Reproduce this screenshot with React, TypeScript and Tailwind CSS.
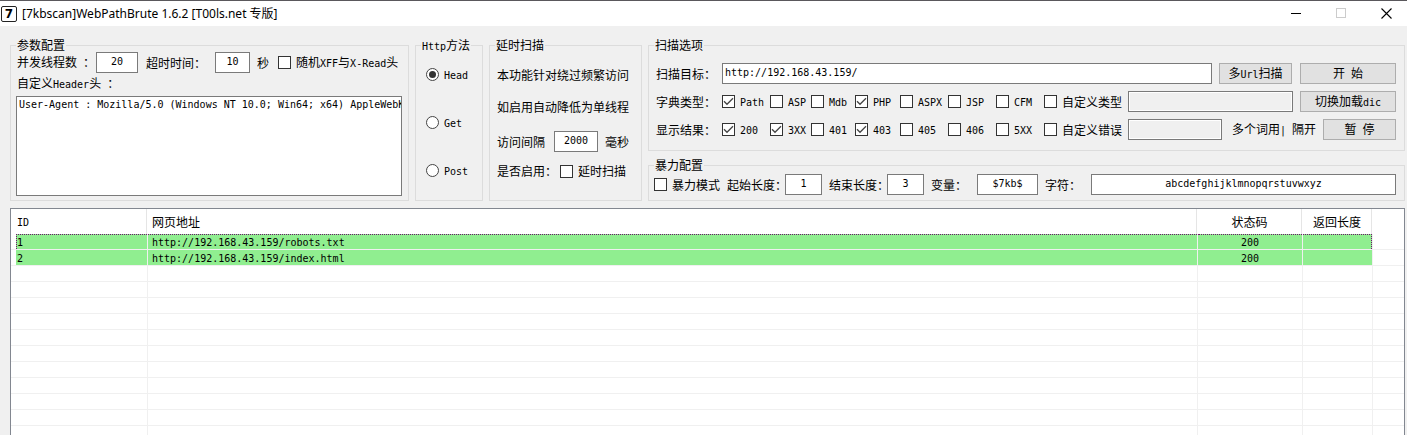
import React from "react";

const CJK = /([\u3000-\u9fff\uff00-\uffef]+)/;

/** Mixed text: Chinese runs at 12px, Latin runs in a 6px-wide monospace cell. */
function T({ children }: { children: string }) {
  return (
    <span className="whitespace-pre">
      {children.split(CJK).map((part, i) =>
        part === "" ? null : CJK.test(part) ? (
          <React.Fragment key={i}>{part}</React.Fragment>
        ) : (
          <span key={i} className="font-['DejaVu_Sans_Mono',monospace] text-[10px]">
            {part}
          </span>
        ),
      )}
    </span>
  );
}

function Group({
  title,
  className,
  children,
}: {
  title: string;
  className: string;
  children: React.ReactNode;
}) {
  return (
    <fieldset className={`min-w-0 border border-[#dcdcdc] ${className}`}>
      <legend className="ml-[5px] h-[14px] px-px leading-[14px]">
        <T>{title}</T>
      </legend>
      {children}
    </fieldset>
  );
}

function Check({ label, checked = false }: { label: string; checked?: boolean }) {
  return (
    <label className="flex items-center gap-[5px]">
      <span className="grid size-[13px] shrink-0">
        <input
          type="checkbox"
          defaultChecked={checked}
          className="peer col-start-1 row-start-1 size-[13px] appearance-none border border-[#333] bg-white"
        />
        <svg
          viewBox="0 0 13 13"
          className="pointer-events-none invisible col-start-1 row-start-1 size-[13px] peer-checked:visible"
        >
          <path d="M2 6.3 L5 9.3 L11 3.3" fill="none" stroke="#444" strokeWidth="1.3" />
        </svg>
      </span>
      <T>{label}</T>
    </label>
  );
}

function Radio({ label, checked = false }: { label: string; checked?: boolean }) {
  return (
    <label className="flex h-[13px] items-center gap-[5px]">
      <span className="grid size-[13px] shrink-0 place-items-center">
        <input
          type="radio"
          name="method"
          defaultChecked={checked}
          className="peer col-start-1 row-start-1 size-[13px] appearance-none rounded-full border border-[#444] bg-white"
        />
        <span className="pointer-events-none invisible col-start-1 row-start-1 size-[7px] rounded-full bg-[#333] peer-checked:visible" />
      </span>
      <T>{label}</T>
    </label>
  );
}

function Field({
  id,
  value,
  className,
  disabled = false,
  label,
}: {
  id: string;
  value?: string;
  className: string;
  disabled?: boolean;
  label?: string;
}) {
  return (
    <input
      id={id}
      type="text"
      aria-label={label}
      defaultValue={value}
      disabled={disabled}
      className={`h-[21px] min-w-0 border border-[#7a7a7a] bg-white px-[2px] pb-[2px] font-['DejaVu_Sans_Mono',monospace] text-[10px] disabled:bg-[#f0f0f0] disabled:shadow-[inset_0_0_0_1px_#fff] ${className}`}
    />
  );
}

function Button({ children, className }: { children: string; className: string }) {
  return (
    <button
      type="button"
      className={`h-[21px] shrink-0 border border-[#adadad] bg-[#e1e1e1] text-center leading-[18px] ${className}`}
    >
      <T>{children}</T>
    </button>
  );
}

const types: [string, boolean][] = [
  ["Path", true],
  ["ASP", false],
  ["Mdb", false],
  ["PHP", true],
  ["ASPX", false],
  ["JSP", false],
  ["CFM", false],
];
const codes: [string, boolean][] = [
  ["200", true],
  ["3XX", true],
  ["401", false],
  ["403", true],
  ["405", false],
  ["406", false],
  ["5XX", false],
];

const results = [
  { id: "1", url: "http://192.168.43.159/robots.txt", status: "200", length: "" },
  { id: "2", url: "http://192.168.43.159/index.html", status: "200", length: "" },
];

function OptionRow({ title, items }: { title: string; items: [string, boolean][] }) {
  return (
    <>
      <span className="w-[66px] shrink-0">
        <T>{title}</T>
      </span>
      <div className="grid shrink-0 grid-cols-[48px_41px_44px_45px_48px_48px_48px]">
        {items.map(([name, on]) => (
          <Check key={name} label={name} checked={on} />
        ))}
      </div>
    </>
  );
}

function TitleBar() {
  return (
    <header className="flex h-[26px] shrink-0 items-center border-t border-[#5a585c] bg-white pl-px">
      <span className="flex size-4 items-center justify-center rounded-[2px] border border-[#222] bg-white font-['DejaVu_Sans',sans-serif] text-[12px] leading-none font-bold">
        7
      </span>
      <h1 className="ml-[5px] flex-1 font-['Noto_Sans','Noto_Sans_CJK_SC',sans-serif] text-[12px]">
        [7kbscan]WebPathBrute 1.6.2 [T00ls.net 专版]
      </h1>
      <div className="flex gap-1">
        <button type="button" aria-label="最小化" className="flex h-[25px] w-[41px] items-center justify-center">
          <svg width="11" height="11" viewBox="0 0 11 11" shapeRendering="crispEdges">
            <path d="M0 5.5H10" stroke="#000" />
          </svg>
        </button>
        <button type="button" aria-label="最大化" disabled className="flex h-[25px] w-[41px] items-center justify-center">
          <svg width="11" height="11" viewBox="0 0 11 11" shapeRendering="crispEdges">
            <path d="M0.5 0.5H9.5V9.5H0.5Z" fill="none" stroke="#ccc" />
          </svg>
        </button>
        <button type="button" aria-label="关闭" className="flex h-[25px] w-[41px] items-center justify-center">
          <svg width="11" height="11" viewBox="0 0 11 11">
            <path d="M0.5 0.5L10.5 10.5M10.5 0.5L0.5 10.5" stroke="#000" strokeWidth="1.1" />
          </svg>
        </button>
      </div>
    </header>
  );
}

function Cell({
  className = "",
  inner = "",
  filled,
  children,
}: {
  className?: string;
  inner?: string;
  filled: boolean;
  children?: React.ReactNode;
}) {
  return (
    <td className={`border-r border-b border-[#f0f0f0] p-0 ${className}`}>
      <div className={`flex h-[15px] items-center ${filled ? "bg-[#90ee90]" : ""} ${inner}`}>{children}</div>
    </td>
  );
}

function ResultTable() {
  const blanks = Array.from({ length: 12 });
  const head = "mr-px flex h-[25px] items-center border-r border-[#e5e5e5]";
  return (
    <div className="mt-[7px] mr-[2px] ml-[10px] flex-1 overflow-hidden border border-b-0 border-[#828790] bg-white">
      <table className="w-full table-fixed border-separate border-spacing-0">
        <colgroup>
          <col className="w-[137px]" />
          <col />
          <col className="w-[105px]" />
          <col className="w-[70px]" />
          <col className="w-[31px]" />
        </colgroup>
        <thead>
          <tr>
            <th className="p-0 font-normal">
              <div className={`${head} pl-[6px]`}>
                <T>ID</T>
              </div>
            </th>
            <th className="p-0 font-normal">
              <div className={`${head} pl-1`}>
                <T>网页地址</T>
              </div>
            </th>
            <th className="p-0 font-normal">
              <div className={`${head} justify-center`}>
                <T>状态码</T>
              </div>
            </th>
            <th className="p-0 font-normal">
              <div className={`${head} justify-center`}>
                <T>返回长度</T>
              </div>
            </th>
            <td />
          </tr>
        </thead>
        <tbody>
          {results.map((r, i) => {
            const top = i === 0 ? "border-t border-dotted border-[#6f116f]" : "";
            return (
              <tr key={r.id}>
                <Cell filled className="pl-[5px]" inner={`${top} ${i === 0 ? "border-l" : "pl-px"}`}>
                  <T>{r.id}</T>
                </Cell>
                <Cell filled inner={`pl-1 ${top}`}>
                  <T>{r.url}</T>
                </Cell>
                <Cell filled inner={`justify-center ${top}`}>
                  <T>{r.status}</T>
                </Cell>
                <Cell filled inner={`${top} ${i === 0 ? "border-r" : ""}`}>
                  {r.length}
                </Cell>
                <td className="border-b border-[#f0f0f0] p-0" />
              </tr>
            );
          })}
          {blanks.map((_, i) => (
            <tr key={i}>
              <Cell filled={false} />
              <Cell filled={false} />
              <Cell filled={false} />
              <Cell filled={false} />
              <td className="border-b border-[#f0f0f0] p-0" />
            </tr>
          ))}
        </tbody>
      </table>
    </div>
  );
}

export default function App() {
  return (
    <div className="flex h-screen flex-col overflow-hidden bg-[#f0f0f0] font-['Noto_Sans_CJK_SC',sans-serif] text-[12px] leading-4 text-black">
      <TitleBar />
      <main className="flex min-h-0 flex-1 flex-col">
        <form className="flex gap-[6px] pt-3 pr-[2px] pl-[10px]">
          <Group title="参数配置" className="w-[399px] shrink-0">
            <div className="flex items-center pl-[6px]">
              <label htmlFor="threads" className="w-[79px]">
                <T>并发线程数 ：</T>
              </label>
              <Field id="threads" value="20" className="w-[42px] text-center" />
              <label htmlFor="timeout" className="ml-2 w-[69px]">
                <T>超时时间：</T>
              </label>
              <Field id="timeout" value="10" className="w-[35px] text-center" />
              <span className="mr-[9px] ml-[7px]">秒</span>
              <Check label="随机XFF与X-Read头" />
            </div>
            <label htmlFor="headers" className="block pl-[6px] leading-5">
              <T>自定义Header头 ：</T>
            </label>
            <div className="flex pt-px pr-[6px] pb-1 pl-[5px]">
              <textarea
                id="headers"
                wrap="off"
                defaultValue="User-Agent : Mozilla/5.0 (Windows NT 10.0; Win64; x64) AppleWebK"
                className="h-[100px] flex-1 resize-none overflow-hidden border border-[#7a7a7a] bg-white pl-[2px] font-['DejaVu_Sans_Mono',monospace] text-[10px] leading-4"
              />
            </div>
          </Group>

          <Group title="Http方法" className="w-[68px] shrink-0">
            <div className="flex flex-col gap-[35px] pt-4 pl-[10px]">
              <Radio label="Head" checked />
              <Radio label="Get" />
              <Radio label="Post" />
            </div>
          </Group>

          <Group title="延时扫描" className="w-[153px] shrink-0">
            <div className="pt-[15px] pl-[7px]">
              <p>本功能针对绕过频繁访问</p>
              <p className="mt-4">如启用自动降低为单线程</p>
              <div className="mt-4 flex items-center">
                <label htmlFor="delay" className="w-[57px]">
                  访问间隔
                </label>
                <Field id="delay" value="2000" className="w-[44px] text-center" />
                <span className="ml-[7px]">毫秒</span>
              </div>
              <div className="mt-[11px] flex items-center">
                <span className="w-[63px]">是否启用：</span>
                <Check label="延时扫描" />
              </div>
            </div>
          </Group>

          <div className="flex min-w-0 flex-1 flex-col gap-[7px]">
            <Group title="扫描选项" className="">
              <div className="flex flex-col gap-[7px] pt-[11px] pr-2 pb-[10px] pl-[7px]">
                <div className="flex items-center">
                  <label htmlFor="target" className="w-[66px] shrink-0 whitespace-nowrap">
                    扫描目标：
                  </label>
                  <Field id="target" value="http://192.168.43.159/" className="mr-[7px] flex-1" />
                  <Button className="mr-2 w-[73px]">多Url扫描</Button>
                  <Button className="w-[96px]">开 始</Button>
                </div>
                <div className="flex items-center">
                  <OptionRow title="字典类型：" items={types} />
                  <Check label="自定义类型" />
                  <Field id="custom-type" label="自定义类型" disabled className="mr-[7px] ml-[6px] flex-1" />
                  <Button className="w-[96px]">切换加载dic</Button>
                </div>
                <div className="flex items-center">
                  <OptionRow title="显示结果：" items={codes} />
                  <Check label="自定义错误" />
                  <Field id="custom-error" label="自定义错误" disabled className="mr-[10px] ml-[6px] flex-1" />
                  <span className="w-[91px] shrink-0">
                    <T>多个词用| 隔开</T>
                  </span>
                  <Button className="w-[73px]">暂 停</Button>
                </div>
              </div>
            </Group>

            <Group title="暴力配置" className="">
              <div className="flex items-center pt-[2px] pr-2 pb-[5px] pl-[5px]">
                <Check label="暴力模式" />
                <label htmlFor="start" className="ml-[7px] w-[58px] shrink-0 whitespace-nowrap">
                  起始长度：
                </label>
                <Field id="start" value="1" className="w-[37px] text-center" />
                <label htmlFor="end" className="ml-[7px] w-[58px] shrink-0 whitespace-nowrap">
                  结束长度：
                </label>
                <Field id="end" value="3" className="w-[37px] text-center" />
                <label htmlFor="variable" className="ml-[7px] w-[46px] shrink-0">
                  变量：
                </label>
                <Field id="variable" value="$7kb$" className="w-[61px] text-center" />
                <label htmlFor="chars" className="ml-[7px] w-[46px] shrink-0">
                  字符：
                </label>
                <Field id="chars" value="abcdefghijklmnopqrstuvwxyz" className="flex-1 text-center" />
              </div>
            </Group>
          </div>
        </form>
        <ResultTable />
      </main>
    </div>
  );
}
